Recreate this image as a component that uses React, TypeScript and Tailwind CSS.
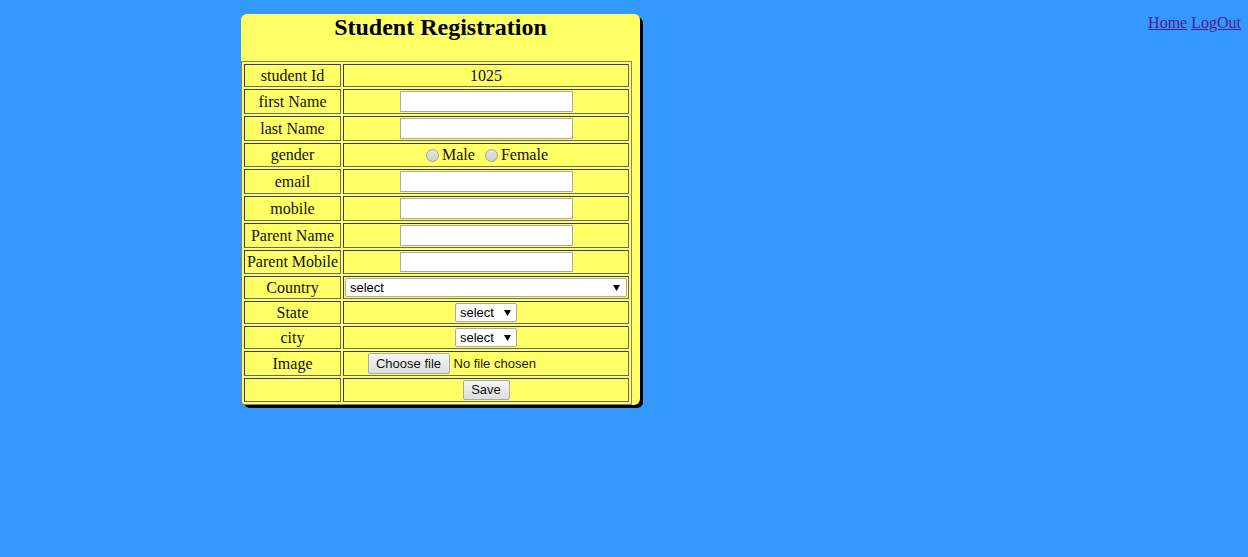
import React from "react";

const sans = "font-['Liberation_Sans',Arial,sans-serif]";

function Arrow() {
  return (
    <svg width="7" height="6" viewBox="0 0 7 6" className="shrink-0">
      <path d="M0 0 L7 0 L3.5 6 Z" fill="#000" />
    </svg>
  );
}

function TextBox({ h = "h-[21px]" }: { h?: string }) {
  return (
    <input
      type="text"
      readOnly
      className={`block mx-auto ${h} w-[173px] border border-[#a9a9a9] bg-white outline-none`}
    />
  );
}

function Radio() {
  return (
    <span className="inline-block h-[13px] w-[13px] rounded-full border border-[#a3a3a3] bg-gradient-to-b from-[#e4e4e4] to-[#cfcfcf]" />
  );
}

function Btn({ children, w, h = "h-[21px]" }: { children: React.ReactNode; w: string; h?: string }) {
  return (
    <span
      className={`${sans} ${w} ${h} inline-flex items-center justify-center rounded-[2px] border border-[#a9a9a9] bg-gradient-to-b from-[#f6f6f6] to-[#dedede] text-[13px] text-[#111]`}
    >
      {children}
    </span>
  );
}

const labelTd =
  "w-[97px] p-[1px] text-center align-middle border border-t-[#3a3a3a] border-l-[#3a3a3a] border-b-[#6a6a6a] border-r-[#6a6a6a] whitespace-nowrap";
const valueTd =
  "p-[1px] text-center align-middle border border-t-[#3a3a3a] border-l-[#3a3a3a] border-b-[#6a6a6a] border-r-[#6a6a6a]";

export default function App() {
  return (
    <div className="min-h-[557px] w-full bg-[#3399ff] flex items-start font-['Liberation_Serif','Times_New_Roman',serif] text-[16px] leading-[18px] text-[#111]">
      <div className="ml-[241px] mt-[14px] w-[399px] bg-[#ffff66] rounded-[6px] shadow-[3px_3px_0_#000] flex flex-col">
        <h2 className="h-[47px] text-center text-[24px] leading-[26px] font-bold text-black">
          Student Registration
        </h2>
        <table className="w-[391px] table-fixed border-separate border-spacing-[2px] border border-[#808080]">
          <tbody>
            <tr>
              <td className={`${labelTd} h-[23px]`}>student Id</td>
              <td className={`${valueTd} h-[23px]`}>1025</td>
            </tr>
            <tr>
              <td className={`${labelTd} h-[25px]`}>first Name</td>
              <td className={`${valueTd} h-[25px]`}>
                <TextBox />
              </td>
            </tr>
            <tr>
              <td className={`${labelTd} h-[25px]`}>last Name</td>
              <td className={`${valueTd} h-[25px]`}>
                <TextBox />
              </td>
            </tr>
            <tr>
              <td className={`${labelTd} h-[24px]`}>gender</td>
              <td className={`${valueTd} h-[24px]`}>
                <div className="flex items-center justify-center pl-[2px]">
                  <Radio />
                  <span className="ml-[3px]">Male</span>
                  <span className="ml-[10px] flex items-center">
                    <Radio />
                  </span>
                  <span className="ml-[3px]">Female</span>
                </div>
              </td>
            </tr>
            <tr>
              <td className={`${labelTd} h-[25px]`}>email</td>
              <td className={`${valueTd} h-[25px]`}>
                <TextBox />
              </td>
            </tr>
            <tr>
              <td className={`${labelTd} h-[25px]`}>mobile</td>
              <td className={`${valueTd} h-[25px]`}>
                <TextBox />
              </td>
            </tr>
            <tr>
              <td className={`${labelTd} h-[25px]`}>Parent Name</td>
              <td className={`${valueTd} h-[25px]`}>
                <TextBox />
              </td>
            </tr>
            <tr>
              <td className={`${labelTd} h-[24px]`}>Parent Mobile</td>
              <td className={`${valueTd} h-[24px]`}>
                <TextBox h="h-[20px]" />
              </td>
            </tr>
            <tr>
              <td className={`${labelTd} h-[23px]`}>Country</td>
              <td className={`${valueTd} h-[23px]`}>
                <div
                  className={`${sans} flex h-[19px] w-full items-center justify-between rounded-[2px] border border-[#a9a9a9] bg-white pl-[4px] pr-[6px] text-[13px] text-black`}
                >
                  <span>select</span>
                  <Arrow />
                </div>
              </td>
            </tr>
            <tr>
              <td className={`${labelTd} h-[23px]`}>State</td>
              <td className={`${valueTd} h-[23px]`}>
                <div
                  className={`${sans} mx-auto flex h-[19px] w-[62px] items-center justify-between rounded-[2px] border border-[#a9a9a9] bg-white pl-[4px] pr-[5px] text-[13px] text-black`}
                >
                  <span>select</span>
                  <Arrow />
                </div>
              </td>
            </tr>
            <tr>
              <td className={`${labelTd} h-[23px]`}>city</td>
              <td className={`${valueTd} h-[23px]`}>
                <div
                  className={`${sans} mx-auto flex h-[19px] w-[62px] items-center justify-between rounded-[2px] border border-[#a9a9a9] bg-white pl-[4px] pr-[5px] text-[13px] text-black`}
                >
                  <span>select</span>
                  <Arrow />
                </div>
              </td>
            </tr>
            <tr>
              <td className={`${labelTd} h-[25px]`}>Image</td>
              <td className={`${valueTd} h-[25px]`}>
                <div className="mx-auto flex w-[237px] items-center">
                  <Btn w="w-[82px]">Choose file</Btn>
                  <span className={`${sans} ml-[4px] text-[13px] text-[#2a1a10]`}>No file chosen</span>
                </div>
              </td>
            </tr>
            <tr>
              <td className={`${labelTd} h-[24px]`}></td>
              <td className={`${valueTd} h-[24px]`}>
                <div className="flex justify-center">
                  <Btn w="w-[47px]" h="h-[20px]">
                    Save
                  </Btn>
                </div>
              </td>
            </tr>
          </tbody>
        </table>
      </div>
      <div className="ml-auto mt-[14px] mr-[7px] flex gap-[4px]">
        <a href="#" className="text-[#551a8b] underline">
          Home
        </a>
        <a href="#" className="text-[#551a8b] underline">
          LogOut
        </a>
      </div>
    </div>
  );
}
